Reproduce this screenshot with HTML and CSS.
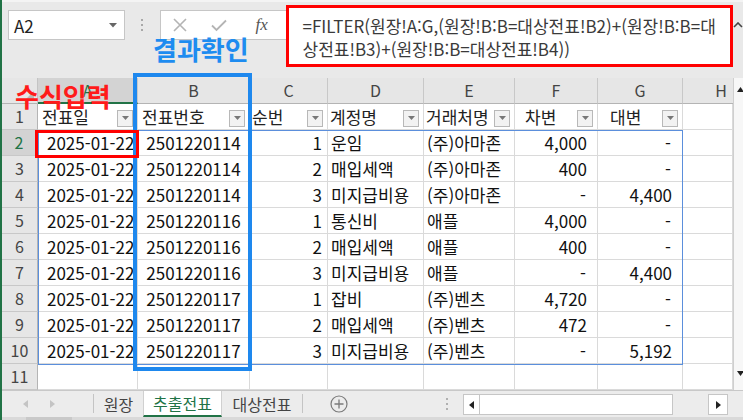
FILE: index.html
```html
<!DOCTYPE html>
<html lang="ko">
<head>
<meta charset="utf-8">
<title>추출전표</title>
<link rel="stylesheet" href="styles.css">
</head>
<body>
<div class="app">
  <div class="frame">
    <div class="fbar">
      <div class="namebox"><span class="nb-txt">A2</span><svg class="nb-arrow" width="8" height="5" viewBox="0 0 8 5"><path d="M0 0H8L4 4.5Z" fill="#666"/></svg></div>
      <div class="grip"><i></i><i></i><i></i></div>
      <div class="fxbox">
        <span class="fx-slot s1"><svg width="14" height="14" viewBox="0 0 14 14"><path d="M1 1L13 13M13 1L1 13" stroke="#b4b4b4" stroke-width="1.6"/></svg></span>
        <span class="fx-slot s2"><svg width="16" height="13" viewBox="0 0 16 13"><path d="M1 6.5L5.5 11L15 1.5" fill="none" stroke="#b4b4b4" stroke-width="1.8"/></svg></span>
        <span class="fx-slot s3"><span class="fx">fx</span></span>
      </div>
      <div class="formula">=FILTER(원장!A:G,(원장!B:B=대상전표!B2)+(원장!B:B=대<br>상전표!B3)+(원장!B:B=대상전표!B4))</div>
      <div class="collapse"><svg width="10" height="6" viewBox="0 0 10 6"><path d="M1 5L5 1L9 5" fill="none" stroke="#444" stroke-width="1.6"/></svg></div>
    </div>

    <div class="sheet">
      <div class="grid">
        <div class="c corner"><svg class="corner-tri" width="9" height="9" viewBox="0 0 9 9"><path d="M9 0V9H0Z" fill="#b9b9b9"/></svg></div>
        <div class="c ch sel">A</div>
        <div class="c ch">B</div>
        <div class="c ch">C</div>
        <div class="c ch">D</div>
        <div class="c ch">E</div>
        <div class="c ch">F</div>
        <div class="c ch">G</div>
        <div class="c ch ch-h">H</div>

        <div class="c rh">1</div>
        <div class="c th p4">전표일<span class="fb"><svg width="7" height="4" viewBox="0 0 7 4"><path d="M0 0H7L3.5 4Z" fill="#777"/></svg></span></div>
        <div class="c th p4">전표번호<span class="fb"><svg width="7" height="4" viewBox="0 0 7 4"><path d="M0 0H7L3.5 4Z" fill="#777"/></svg></span></div>
        <div class="c th p2">순번<span class="fb"><svg width="7" height="4" viewBox="0 0 7 4"><path d="M0 0H7L3.5 4Z" fill="#777"/></svg></span></div>
        <div class="c th p2">계정명<span class="fb"><svg width="7" height="4" viewBox="0 0 7 4"><path d="M0 0H7L3.5 4Z" fill="#777"/></svg></span></div>
        <div class="c th p2">거래처명<span class="fb"><svg width="7" height="4" viewBox="0 0 7 4"><path d="M0 0H7L3.5 4Z" fill="#777"/></svg></span></div>
        <div class="c th p10">차변<span class="fb"><svg width="7" height="4" viewBox="0 0 7 4"><path d="M0 0H7L3.5 4Z" fill="#777"/></svg></span></div>
        <div class="c th p12">대변<span class="fb"><svg width="7" height="4" viewBox="0 0 7 4"><path d="M0 0H7L3.5 4Z" fill="#777"/></svg></span></div>
        <div class="c"></div>

        <div class="c rh sel">2</div>
        <div class="c date">2025-01-22</div><div class="c ctr">2501220114</div><div class="c r">1</div><div class="c l">운임</div><div class="c l">(주)아마존</div><div class="c num">4,000</div><div class="c num dash">-</div><div class="c"></div>

        <div class="c rh">3</div>
        <div class="c date">2025-01-22</div><div class="c ctr">2501220114</div><div class="c r">2</div><div class="c l">매입세액</div><div class="c l">(주)아마존</div><div class="c num">400</div><div class="c num dash">-</div><div class="c"></div>

        <div class="c rh">4</div>
        <div class="c date">2025-01-22</div><div class="c ctr">2501220114</div><div class="c r">3</div><div class="c l">미지급비용</div><div class="c l">(주)아마존</div><div class="c num dash">-</div><div class="c num">4,400</div><div class="c"></div>

        <div class="c rh">5</div>
        <div class="c date">2025-01-22</div><div class="c ctr">2501220116</div><div class="c r">1</div><div class="c l">통신비</div><div class="c l">애플</div><div class="c num">4,000</div><div class="c num dash">-</div><div class="c"></div>

        <div class="c rh">6</div>
        <div class="c date">2025-01-22</div><div class="c ctr">2501220116</div><div class="c r">2</div><div class="c l">매입세액</div><div class="c l">애플</div><div class="c num">400</div><div class="c num dash">-</div><div class="c"></div>

        <div class="c rh">7</div>
        <div class="c date">2025-01-22</div><div class="c ctr">2501220116</div><div class="c r">3</div><div class="c l">미지급비용</div><div class="c l">애플</div><div class="c num dash">-</div><div class="c num">4,400</div><div class="c"></div>

        <div class="c rh">8</div>
        <div class="c date">2025-01-22</div><div class="c ctr">2501220117</div><div class="c r">1</div><div class="c l">잡비</div><div class="c l">(주)벤츠</div><div class="c num">4,720</div><div class="c num dash">-</div><div class="c"></div>

        <div class="c rh">9</div>
        <div class="c date">2025-01-22</div><div class="c ctr">2501220117</div><div class="c r">2</div><div class="c l">매입세액</div><div class="c l">(주)벤츠</div><div class="c num">472</div><div class="c num dash">-</div><div class="c"></div>

        <div class="c rh">10</div>
        <div class="c date">2025-01-22</div><div class="c ctr">2501220117</div><div class="c r">3</div><div class="c l">미지급비용</div><div class="c l">(주)벤츠</div><div class="c num dash">-</div><div class="c num">5,192</div><div class="c"></div>

        <div class="c rh">11</div>
        <div class="c"></div><div class="c"></div><div class="c"></div><div class="c"></div><div class="c"></div><div class="c"></div><div class="c"></div><div class="c"></div>
      </div>
      <div class="vscroll">
        <svg class="va up" width="7" height="5" viewBox="0 0 7 5"><path d="M0 5H7L3.5 0Z" fill="#222"/></svg>
        <svg class="va down" width="7" height="5" viewBox="0 0 7 5"><path d="M0 0H7L3.5 5Z" fill="#222"/></svg>
      </div>
    </div>

    <div class="tabbar">
      <div class="nav">
        <svg class="nav-a" width="5" height="8" viewBox="0 0 5 8"><path d="M5 0V8L0 4Z" fill="#c4c4c4"/></svg>
        <svg class="nav-b" width="5" height="8" viewBox="0 0 5 8"><path d="M0 0V8L5 4Z" fill="#c4c4c4"/></svg>
      </div>
      <span class="sep"></span>
      <div class="tab t1">원장</div>
      <div class="tab active">추출전표</div>
      <div class="tab t3">대상전표</div>
      <span class="sep"></span>
      <div class="addsheet"><svg width="18" height="18" viewBox="0 0 18 18"><circle cx="9" cy="9" r="8" fill="none" stroke="#7a7a7a" stroke-width="1.2"/><path d="M9 4.5V13.5M4.5 9H13.5" stroke="#7a7a7a" stroke-width="1.3"/></svg></div>
      <div class="hgrip"><i></i><i></i><i></i></div>
      <div class="hscroll">
        <span class="hbtn"><svg width="5" height="8" viewBox="0 0 5 8"><path d="M5 0V8L0 4Z" fill="#222"/></svg></span>
        <span class="htrack"></span>
      </div>
      <div class="hgap"></div>
      <div class="hright"><svg width="5" height="8" viewBox="0 0 5 8"><path d="M0 0V8L5 4Z" fill="#222"/></svg></div>
    </div>
    <div class="status"><span class="status-mark"></span></div>
  </div>

  <div class="spill"></div>
  <div class="box-blue"></div>
  <div class="box-red"></div>
  <div class="ann ann-result">결과확인</div>
  <div class="ann ann-input">수식입력</div>
</div>
</body>
</html>
```

FILE: styles.css
```css
* { box-sizing: border-box; }
html, body { margin: 0; padding: 0; }
body {
  width: 743px;
  height: 420px;
  overflow: hidden;
  background: #e9e9e9;
  font-family: "Noto Sans CJK KR", "Noto Sans", sans-serif;
}
.app { position: relative; width: 743px; height: 420px; overflow: hidden; }
.frame {
  height: 420px;
  border-left: 2px solid #217346;
  display: flex;
  flex-direction: column;
  background: #e9e9e9;
}

/* formula bar */
.fbar { height: 78px; flex: none; display: flex; align-items: flex-start; border-top: 2px solid #f4f4f4; }
.namebox {
  margin: 8px 0 0 6px;
  width: 117px;
  height: 30px;
  background: #fff;
  border: 1px solid #c6c6c6;
  display: flex;
  align-items: center;
  padding: 0 7px 0 5px;
  font-size: 17px;
  color: #222;
}
.nb-txt { flex: 1; }
.grip {
  width: 35px; height: 30px; margin-top: 8px;
  display: flex; flex-direction: column; align-items: center; justify-content: center; gap: 3px;
}
.grip i { display: block; width: 2px; height: 2px; background: #a8a8a8; }
.fxbox {
  margin-top: 8px;
  width: 126px;
  height: 30px;
  background: #fff;
  border: 1px solid #c6c6c6;
  border-right: none;
  display: flex;
  align-items: center;
}
.fx-slot { display: flex; align-items: center; justify-content: center; height: 28px; }
.s1 { width: 40px; }
.s2 { width: 38px; }
.s3 { width: 48px; }
.fx { font-family: "Liberation Serif", serif; font-style: italic; font-size: 17px; color: #555; }
.formula {
  margin-top: 3px;
  width: 449px;
  height: 62px;
  background: #fff;
  border: 3px solid #ff0000;
  padding: 6px 0 0 14px;
  font-size: 17px;
  line-height: 23px;
  color: #3a3a3a;
  white-space: nowrap;
}
.collapse { flex: 1; display: flex; justify-content: center; padding-top: 20px; }

/* sheet */
.sheet { height: 312px; flex: none; display: flex; }
.grid {
  width: 731px;
  display: grid;
  grid-template-columns: 36px 100px 112px 78px 96px 91px 83px 85px 50px;
  grid-auto-rows: 26px;
}
.c {
  background: #fff;
  border-right: 1px solid #dadada;
  border-bottom: 1px solid #dadada;
  font-size: 17px;
  line-height: 25px;
  white-space: nowrap;
  overflow: hidden;
  color: #111;
  padding: 0 3px;
}
.corner { background: #e6e6e6; border-right: 1px solid #c4c4c4; border-bottom: 1px solid #b4b4b4; position: relative; }
.corner-tri { position: absolute; right: 3px; bottom: 3px; }
.ch { background: #e6e6e6; color: #444; text-align: center; font-size: 16px; border-right: 1px solid #c8c8c8; border-bottom: 1px solid #b4b4b4; }
.ch.sel { background: #d3d3d3; border-bottom: 2px solid #217346; color: #217346; }
.ch-h { text-align: right; padding-right: 6px; border-right: none; }
.rh { background: #e6e6e6; color: #444; text-align: center; font-size: 16px; border-right: 1px solid #b4b4b4; border-bottom: 1px solid #c8c8c8; padding: 0; }
.rh.sel { background: #d3d3d3; border-right: 2px solid #217346; color: #217346; }

.th { display: flex; align-items: center; color: #222; }
.p2 { padding-left: 2px; }
.p4 { padding-left: 4px; }
.p10 { padding-left: 10px; }
.p12 { padding-left: 12px; }
.fb {
  margin-left: auto;
  margin-right: 1px;
  flex: none;
  width: 16px;
  height: 17px;
  border: 1px solid #b8b8b8;
  background: #f2f2f2;
  display: flex;
  align-items: center;
  justify-content: center;
  margin-top: 3px;
}
.date { padding-left: 9px; padding-right: 0; }
.ctr { text-align: center; }
.r { text-align: right; padding-right: 5px; }
.l { padding-left: 3px; }
.num { text-align: right; padding-right: 10px; }
.dash { padding-right: 11px; }

.vscroll {
  width: 10px;
  position: relative;
  background: #f7f7f7;
  border-left: 1px solid #cfcfcf;
}
.va { position: absolute; left: 3px; }
.va.up { top: 9px; }
.va.down { top: 293px; }

/* tabs */
.tabbar {
  height: 27px;
  flex: none;
  display: flex;
  align-items: stretch;
  background: #ececec;
  border-top: 1px solid #c8c8c8;
  font-size: 16px;
  color: #444;
}
.nav { width: 91px; display: flex; align-items: center; }
.nav-a { margin-left: 21px; }
.nav-b { margin-left: 22px; }
.sep { width: 1px; background: #c4c4c4; margin: 3px 0 4px; }
.tab { display: flex; align-items: center; justify-content: center; line-height: 1; }
.t1 { width: 49px; }
.active {
  width: 79px;
  background: #fff;
  color: #217346;
  border-bottom: 2px solid #217346;
  border-left: 1px solid #d0d0d0;
  border-right: 1px solid #d0d0d0;
}
.t3 { width: 80px; }
.addsheet { width: 73px; display: flex; align-items: center; padding-left: 27px; }
.hgrip { width: 87px; display: flex; flex-direction: column; align-items: flex-end; justify-content: center; gap: 3px; padding-right: 15px; }
.hgrip i { display: block; width: 2px; height: 2px; background: #b0b0b0; }
.hscroll {
  width: 210px;
  margin: 3px 0 2px;
  background: #fff;
  border: 1px solid #c6c6c6;
  display: flex;
}
.hbtn { width: 16px; border-right: 1px solid #c6c6c6; display: flex; align-items: center; justify-content: center; }
.htrack { flex: 1; }
.hgap { width: 35px; }
.hright {
  width: 20px;
  margin: 3px 0 2px;
  background: #fff;
  border: 1px solid #c6c6c6;
  display: flex; align-items: center; justify-content: center;
}
.status { flex: 1; background: #d9d9d9; position: relative; }
.status-mark { position: absolute; left: 24px; top: 0; width: 46px; height: 3px; background: #c9c9c9; }

/* annotations overlay */
.spill {
  position: absolute;
  left: 38px; top: 130px;
  width: 645px; height: 235px;
  border: 1px solid #5b8fdc;
  pointer-events: none;
}
.box-blue {
  position: absolute;
  left: 133px; top: 73px;
  width: 119px; height: 298px;
  border: 4px solid #1e88ee;
}
.box-red {
  position: absolute;
  left: 35px; top: 130px;
  width: 104px; height: 28px;
  border: 3px solid #ff0000;
}
.ann {
  position: absolute;
  font-size: 26px;
  font-weight: 700;
  line-height: 1;
  white-space: nowrap;
}
.ann-result { left: 153px; top: 36px; color: #1e8cf0; }
.ann-input { left: 15px; top: 83px; color: #ff1a1a; }
```
